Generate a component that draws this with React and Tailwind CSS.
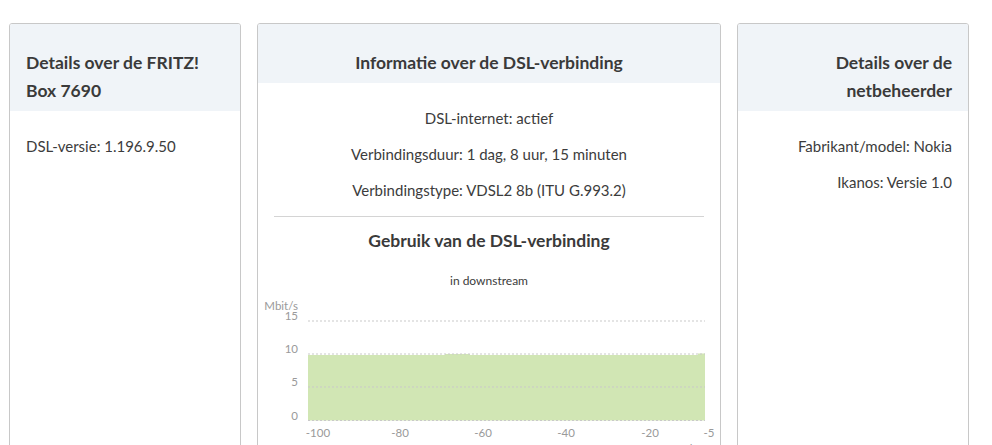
const font = { fontFamily: '"Source Sans Pro", Lato, "Noto Sans", sans-serif' };

function Card({ title, align = "left", width, children }) {
  const alignClass = align === "right" ? "text-right" : align === "center" ? "text-center" : "text-left";
  return (
    <section className={`${width} overflow-hidden rounded-[3px] border border-[#c8c8c8] bg-white`}>
      <header className={`bg-[#f0f4f8] px-4 pt-[25px] pb-[6px] ${alignClass}`}>
        <h2 className="text-[17.5px] font-bold leading-[28px] text-[#3a3a3a]">{title}</h2>
      </header>
      <div className={`px-4 pt-6 pb-4 ${alignClass}`}>{children}</div>
    </section>
  );
}

function Line({ children }) {
  return <p className="mb-[14px] text-[15px] leading-[22px] text-[#3c3c3c]">{children}</p>;
}

const xTicks = [
  { label: "-100", x: 60 },
  { label: "-80", x: 142 },
  { label: "-60", x: 225 },
  { label: "-40", x: 308 },
  { label: "-20", x: 392 },
  { label: "-5", x: 451 },
];

const yTicks = [
  { label: "15", y: 320 },
  { label: "10", y: 353 },
  { label: "5", y: 386 },
  { label: "0", y: 419.5 },
];

function UsageChart() {
  // svg origin = page x 258, page y 295
  const top = 295;
  const area = "M50 59 L187 59 L187 58 L212 58 L212 59 L440 59 L440 57.5 L447 57.5 L447 124.5 L50 124.5 Z";
  return (
    <svg width="461" height="160" viewBox="0 0 461 160" className="block" style={font}>
      <path d={area} fill="#d1e6b4" />
      {yTicks.map((t) => (
        <g key={t.label}>
          <line x1="50" x2="447" y1={t.y - top} y2={t.y - top} stroke="#c9c9c9" strokeDasharray="2 2" />
          <text x="40" y={t.y - top - 1} textAnchor="end" fontSize="11.5" fill="#9a9a9a">
            {t.label}
          </text>
        </g>
      ))}
      <text x="40" y="14" textAnchor="end" fontSize="11.5" fill="#9a9a9a">
        Mbit/s
      </text>
      {xTicks.map((t) => (
        <text key={t.label} x={t.x} y="141" textAnchor="middle" fontSize="11.5" fill="#9a9a9a">
          {t.label}
        </text>
      ))}
      <text x="447" y="157" textAnchor="end" fontSize="11.5" fill="#9a9a9a">
        seconden
      </text>
    </svg>
  );
}

export default function App() {
  return (
    <div className="h-[445px] overflow-hidden bg-white pt-[23px] pl-[9px]" style={font}>
      <div className="flex items-start gap-4">
        <Card title="Details over de FRITZ! Box 7690" width="w-[232px] h-[460px]">
          <Line>DSL-versie: 1.196.9.50</Line>
        </Card>

        <section className="h-[460px] w-[464px] overflow-hidden rounded-[3px] border border-[#c8c8c8] bg-white">
          <header className="bg-[#f0f4f8] px-4 pt-[25px] pb-[6px] text-center">
            <h2 className="text-[17.5px] font-bold leading-[28px] text-[#3a3a3a]">
              Informatie over de DSL-verbinding
            </h2>
          </header>
          <div className="px-4 pt-6 text-center">
            <Line>DSL-internet: actief</Line>
            <Line>Verbindingsduur: 1 dag, 8 uur, 15 minuten</Line>
            <p className="text-[15px] leading-[22px] text-[#3c3c3c]">Verbindingstype: VDSL2 8b (ITU G.993.2)</p>
            <hr className="mt-[15px] border-t border-[#d4d4d4]" />
            <h3 className="mt-[10px] text-[17.5px] font-bold leading-[28px] text-[#3a3a3a]">
              Gebruik van de DSL-verbinding
            </h3>
            <p className="mt-[18px] text-[12px] leading-[16px] text-[#3c3c3c]">in downstream</p>
          </div>
          <div className="mt-[7px]">
            <UsageChart />
          </div>
        </section>

        <Card title="Details over de netbeheerder" align="right" width="w-[232px] h-[460px]">
          <Line>Fabrikant/model: Nokia</Line>
          <Line>Ikanos: Versie 1.0</Line>
        </Card>
      </div>
    </div>
  );
}
